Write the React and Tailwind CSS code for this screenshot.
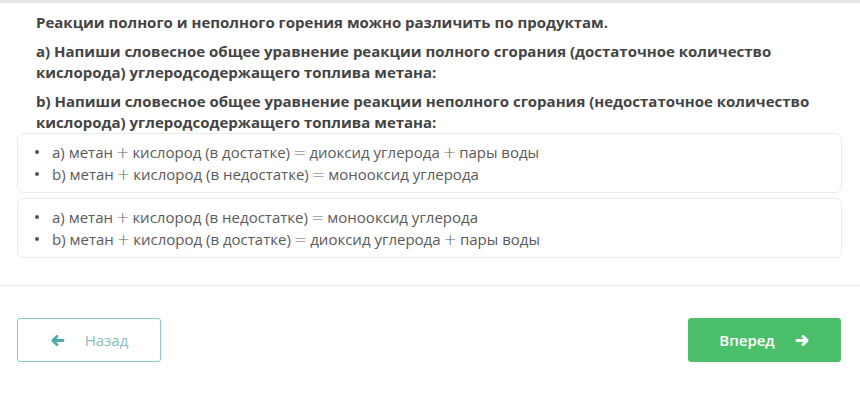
const font = { fontFamily: '"Open Sans", "Liberation Sans", sans-serif' };

const options = [
	[
		["a) метан", "+", "кислород (в достатке)", "=", "диоксид углерода", "+", "пары воды"],
		["b) метан", "+", "кислород (в недостатке)", "=", "монооксид углерода"],
	],
	[
		["a) метан", "+", "кислород (в недостатке)", "=", "монооксид углерода"],
		["b) метан", "+", "кислород (в достатке)", "=", "диоксид углерода", "+", "пары воды"],
	],
];

const ArrowLeft = ({ className }) => (
	<svg viewBox='0 0 16 14' className={className} fill='none' stroke='currentColor' strokeWidth='3' strokeLinecap='round' strokeLinejoin='round'>
		<path d='M14 7H3M7.5 2.5L3 7l4.5 4.5' />
	</svg>
);

const ArrowRight = ({ className }) => (
	<svg viewBox='0 0 16 14' className={className} fill='none' stroke='currentColor' strokeWidth='3' strokeLinecap='round' strokeLinejoin='round'>
		<path d='M2 7h11M8.5 2.5L13 7l-4.5 4.5' />
	</svg>
);

const App = () => {
	return (
		<div className='w-[860px] h-[406px] bg-white overflow-hidden' style={font}>
			<div className='h-[3px] bg-[#e6e6e6]'></div>

			{/* Question */}
			<div className='pl-[36px] pr-[40px] pt-[9px] text-[15px] leading-[21px] font-bold text-[#444]'>
				<p>Реакции полного и неполного горения можно различить по продуктам.</p>
				<p className='mt-[8px]'>
					a) Напиши словесное общее уравнение реакции полного сгорания (достаточное количество кислорода)
					углеродсодержащего топлива метана:
				</p>
				<p className='mt-[8px]'>
					b) Напиши словесное общее уравнение реакции неполного сгорания (недостаточное количество
					кислорода) углеродсодержащего топлива метана:
				</p>
			</div>

			{/* Answer options */}
			<div className='flex flex-col gap-[5px] pl-[17px] pr-[18px]'>
				{options.map((items, i) => (
					<div
						key={i}
						className='border border-[#ececec] rounded-[6px] px-[16px] py-[7px] text-[15px] leading-[22px] text-[#5a5a5a]'
					>
						{items.map((parts, j) => (
							<div key={j} className='flex items-center h-[22px]'>
								<span className='w-[4px] h-[4px] rounded-full bg-[#555] ml-[1px] mr-[13px]'></span>
								<span>
									{parts.map((p, k) =>
										p === "+" || p === "=" ? (
											<span key={k} className='mx-[3px] text-[16px] leading-none text-[#666]' style={{ fontFamily: '"DejaVu Sans", sans-serif', fontWeight: 300 }}>
												{p}
											</span>
										) : (
											<span key={k}>{p}</span>
										)
									)}
								</span>
							</div>
						))}
					</div>
				))}
			</div>

			<div className='mt-[27px] h-px bg-[#ebebeb]'></div>

			{/* Navigation */}
			<div className='flex justify-between pl-[17px] pr-[19px] mt-[32px]'>
				<button className='w-[144px] h-[44px] border border-[#8fcaca] rounded-[3px] flex items-center justify-center gap-[20px] text-[#86bfbf] text-[15px]'>
					<ArrowLeft className='w-[15px] h-[13px] text-[#4faaa8]' />
					<span>Назад</span>
				</button>
				<button className='w-[153px] h-[44px] bg-[#4cbf6b] rounded-[3px] flex items-center justify-center gap-[20px] text-white text-[15px] font-semibold'>
					<span>Вперед</span>
					<ArrowRight className='w-[15px] h-[13px]' />
				</button>
			</div>
		</div>
	);
};
export default App;
